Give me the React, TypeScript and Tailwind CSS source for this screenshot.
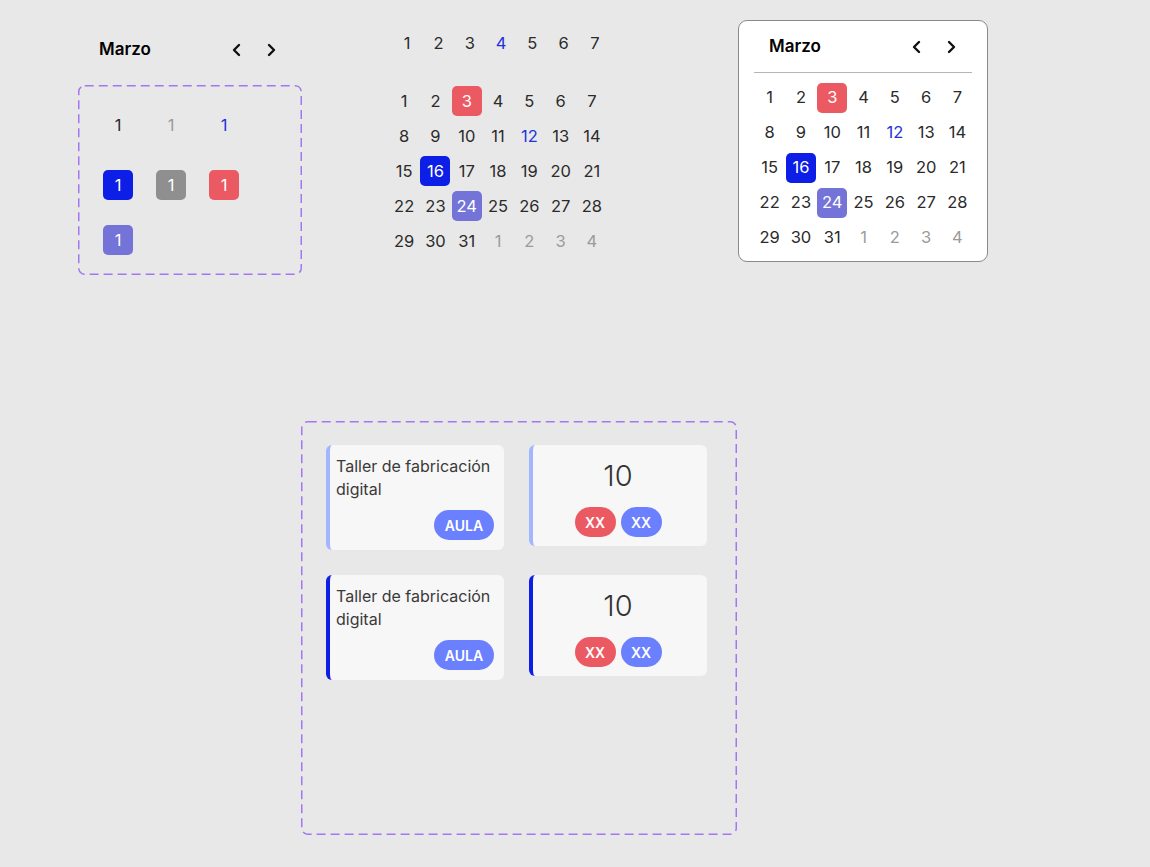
import React from 'react';

const font = { fontFamily: 'Inter, "Noto Sans", sans-serif' };

type Day = { n: number; kind?: 'muted' | 'blue' | 'red' | 'solid' | 'purple' };

const weeks: Day[][] = [
  [{ n: 1 }, { n: 2 }, { n: 3, kind: 'red' }, { n: 4 }, { n: 5 }, { n: 6 }, { n: 7 }],
  [{ n: 8 }, { n: 9 }, { n: 10 }, { n: 11 }, { n: 12, kind: 'blue' }, { n: 13 }, { n: 14 }],
  [{ n: 15 }, { n: 16, kind: 'solid' }, { n: 17 }, { n: 18 }, { n: 19 }, { n: 20 }, { n: 21 }],
  [{ n: 22 }, { n: 23 }, { n: 24, kind: 'purple' }, { n: 25 }, { n: 26 }, { n: 27 }, { n: 28 }],
  [
    { n: 29 },
    { n: 30 },
    { n: 31 },
    { n: 1, kind: 'muted' },
    { n: 2, kind: 'muted' },
    { n: 3, kind: 'muted' },
    { n: 4, kind: 'muted' },
  ],
];

function DayCell({ day }: { day: Day }) {
  if (day.kind === 'red' || day.kind === 'solid' || day.kind === 'purple') {
    const bg =
      day.kind === 'red' ? 'bg-[#eb5a62]' : day.kind === 'solid' ? 'bg-[#0d1fe6]' : 'bg-[#7373d8]';
    return (
      <div className="flex h-[35px] items-center justify-center">
        <span className={`flex h-[30px] w-[30px] items-center justify-center rounded-[5px] text-white ${bg}`}>
          {day.n}
        </span>
      </div>
    );
  }
  const color =
    day.kind === 'muted' ? 'text-[#9b9b9b]' : day.kind === 'blue' ? 'text-[#1f33dc]' : 'text-[#2b2b2b]';
  return <div className={`flex h-[35px] items-center justify-center ${color}`}>{day.n}</div>;
}

function MonthGrid() {
  return (
    <div className="grid grid-cols-[repeat(7,31.3px)] text-[16.5px]">
      {weeks.flat().map((d, i) => (
        <DayCell key={i} day={d} />
      ))}
    </div>
  );
}

function Chevron({ dir }: { dir: 'left' | 'right' }) {
  return (
    <svg width="12" height="14" viewBox="0 0 12 14" fill="none">
      <path
        d={dir === 'left' ? 'M8 2 L3 7 L8 12' : 'M4 2 L9 7 L4 12'}
        stroke="#111"
        strokeWidth="2.4"
        strokeLinecap="round"
        strokeLinejoin="round"
      />
    </svg>
  );
}

function Header({ width }: { width: number }) {
  return (
    <div className="flex items-center justify-between" style={{ width }}>
      <span className="text-[17px] font-semibold text-black">Marzo</span>
      <div className="flex items-center gap-[22px]">
        <Chevron dir="left" />
        <Chevron dir="right" />
      </div>
    </div>
  );
}

function DashedFrame({ w, h }: { w: number; h: number }) {
  return (
    <svg className="pointer-events-none absolute left-0 top-0" width={w} height={h}>
      <rect
        x="0.75"
        y="0.75"
        width={w - 1.5}
        height={h - 1.5}
        rx="6"
        fill="none"
        stroke="#a377ef"
        strokeWidth="1.5"
        strokeDasharray="9 5"
      />
    </svg>
  );
}

function SingleDay({ kind }: { kind: 'plain' | 'muted' | 'blue' | 'solid' | 'gray' | 'red' | 'purple' }) {
  const boxed: Record<string, string> = {
    solid: 'bg-[#0d1fe6]',
    gray: 'bg-[#8f8f8f]',
    red: 'bg-[#eb5a62]',
    purple: 'bg-[#7373d8]',
  };
  if (boxed[kind]) {
    return (
      <span className={`flex h-[30px] w-[30px] items-center justify-center rounded-[5px] text-white ${boxed[kind]}`}>
        1
      </span>
    );
  }
  const color = kind === 'muted' ? 'text-[#9b9b9b]' : kind === 'blue' ? 'text-[#1f33dc]' : 'text-[#2b2b2b]';
  return <span className={`mb-[5px] flex h-[30px] w-[30px] items-center justify-center ${color}`}>1</span>;
}

function ClassCard({ accent }: { accent: string }) {
  return (
    <div className={`flex h-[105px] w-[178px] flex-col justify-between rounded-[6px] border-l-4 bg-[#f7f7f7] py-[10px] pl-[6px] pr-[10px] ${accent}`}>
      <p className="text-[16px] leading-[23px] text-[#3a3a3a]">Taller de fabricación digital</p>
      <div className="flex justify-end">
        <span className="flex h-[30px] w-[60px] items-center justify-center rounded-full bg-[#6b80ff] text-[14px] font-semibold text-white">
          AULA
        </span>
      </div>
    </div>
  );
}

function CountCard({ accent }: { accent: string }) {
  return (
    <div className={`flex h-[101px] w-[178px] flex-col items-center rounded-[6px] border-l-4 bg-[#f7f7f7] pr-[4px] pt-[12px] ${accent}`}>
      <span className="text-[29px] font-light leading-[38px] text-[#333]">10</span>
      <div className="mt-[12px] flex gap-[5px]">
        <span className="flex h-[30px] w-[41px] items-center justify-center rounded-full bg-[#eb5a62] text-[14px] font-semibold text-white">
          XX
        </span>
        <span className="flex h-[30px] w-[41px] items-center justify-center rounded-full bg-[#6b80ff] text-[14px] font-semibold text-white">
          XX
        </span>
      </div>
    </div>
  );
}

export default function App() {
  return (
    <div className="relative h-[867px] w-[1150px] overflow-hidden bg-[#e8e8e8]" style={font}>
      {/* header component */}
      <div className="absolute left-[99px] top-[37px]">
        <Header width={178} />
      </div>

      {/* day variants */}
      <div className="absolute left-[78px] top-[85px] h-[190px] w-[224px]">
        <DashedFrame w={224} h={190} />
        <div className="grid grid-cols-[30px_30px_30px] gap-x-[23px] gap-y-[25px] pl-[25px] pt-[25px] text-[16.5px]">
          <SingleDay kind="plain" />
          <SingleDay kind="muted" />
          <SingleDay kind="blue" />
          <SingleDay kind="solid" />
          <SingleDay kind="gray" />
          <SingleDay kind="red" />
          <SingleDay kind="purple" />
        </div>
      </div>

      {/* week row */}
      <div className="absolute left-[391.5px] top-[25.5px] grid grid-cols-[repeat(7,31.3px)] text-[16.5px] text-[#2b2b2b]">
        {[1, 2, 3, 4, 5, 6, 7].map((n) => (
          <div key={n} className={`flex h-[35px] items-center justify-center ${n === 4 ? 'text-[#1f33dc]' : ''}`}>
            {n}
          </div>
        ))}
      </div>

      {/* month grid */}
      <div className="absolute left-[388.5px] top-[83.5px]">
        <MonthGrid />
      </div>

      {/* full calendar */}
      <div className="absolute left-[738px] top-[20px] h-[242px] w-[250px] rounded-[9px] border border-[#8a8a8a] bg-white px-[15px]">
        <div className="flex h-[51px] items-center pl-[15px] pr-[13px]">
          <Header width={188} />
        </div>
        <div className="border-t border-[#b5b5b5]" />
        <div className="pt-[7px]">
          <MonthGrid />
        </div>
      </div>

      {/* event cards */}
      <div className="absolute left-[301px] top-[421px] h-[414px] w-[436px]">
        <DashedFrame w={436} h={414} />
        <div className="grid grid-cols-[178px_178px] items-start gap-x-[25px] gap-y-[25px] pl-[25px] pt-[24px]">
          <ClassCard accent="border-[#a3b5ff]" />
          <CountCard accent="border-[#a3b5ff]" />
          <ClassCard accent="border-[#0d1fe6]" />
          <CountCard accent="border-[#0d1fe6]" />
        </div>
      </div>
    </div>
  );
}
